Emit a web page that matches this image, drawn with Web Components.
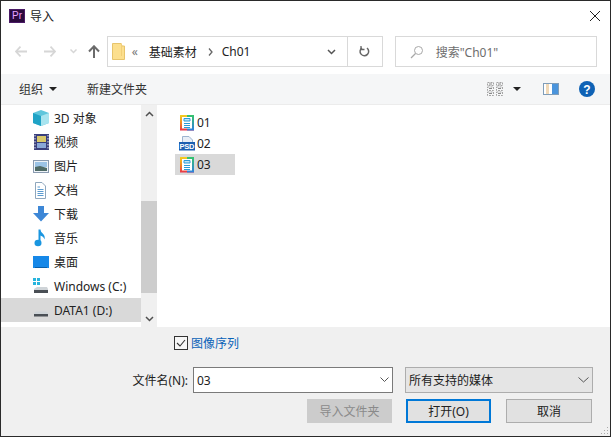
<!DOCTYPE html>
<html>
<head>
<meta charset="utf-8">
<style>
  html, body { margin: 0; height: 100%; overflow: hidden; background: #fff; }
  body { font: 12px "Noto Sans", "Noto Sans CJK SC", sans-serif; color: #1a1a1a; }
</style>
</head>
<body>
<import-dialog></import-dialog>

<script>
const FONT = `"Noto Sans", "Noto Sans CJK SC", sans-serif`;

class TitleBar extends HTMLElement {
  constructor() {
    super();
    this.attachShadow({ mode: 'open' });
    this.shadowRoot.innerHTML = `
    <style>
      :host { display: flex; align-items: center; height: 31px; padding: 0 10px 2px 8px; box-sizing: border-box; background: #fff; }
      .logo { width: 16px; height: 14px; background: #2b0a3d; border: 1px solid #4a1a66; box-sizing: border-box; color: #e8a1ff; font: 10px/12px "Liberation Sans", sans-serif; text-align: center; }
      .name { margin-left: 5px; flex: 1; color: #222; font-size: 12px; }
      svg { display: block; }
    </style>
    <div class="logo">Pr</div>
    <div class="name">导入</div>
    <svg width="10" height="10" viewBox="0 0 10 10"><path d="M0 0L10 10M10 0L0 10" stroke="#222" fill="none"/></svg>
    `;
  }
}

class NavBar extends HTMLElement {
  constructor() {
    super();
    this.attachShadow({ mode: 'open' });
    this.shadowRoot.innerHTML = `
    <style>
      :host { display: flex; align-items: center; height: 42px; padding: 0 13px 3px 12px; box-sizing: border-box; background: #fff; }
      .arrows { display: flex; align-items: center; width: 94px; }
      .arrows svg { display: block; }
      .addr { display: flex; align-items: center; width: 277px; height: 31px; box-sizing: border-box; border: 1px solid #d9d9d9; }
      .folder { margin-left: 4px; }
      .crumbs { flex: 1; display: flex; align-items: center; color: #222; }
      .dim { color: #777; margin: 0 8px 0 7px; width: 9px; font-size: 12px; }
      .sep { margin: 0 9px 0 11px; }
      .drop { width: 30px; display: flex; justify-content: center; }
      .refresh { width: 34px; height: 100%; border-left: 1px solid #d9d9d9; display: flex; align-items: center; justify-content: center; }
      .search { display: flex; align-items: center; width: 203px; height: 31px; box-sizing: border-box; border: 1px solid #d9d9d9; margin-left: 12px; color: #6d6d6d; padding-left: 14px; }
      .search span { margin-left: 12px; }
    </style>
    <div class="arrows">
      <svg style="margin-left:2px" width="12" height="11" viewBox="0 0 12 11"><path d="M5.500 .7L.9 5.500L5.500 10.300M1 5.500H12" stroke="#d6d6d6" stroke-width="1.800" fill="none"/></svg>
      <svg style="margin-left:17px" width="12" height="11" viewBox="0 0 12 11"><path d="M6.500 .7L11.100 5.500L6.500 10.300M11 5.500H0" stroke="#d6d6d6" stroke-width="1.800" fill="none"/></svg>
      <svg style="margin-left:14px" width="7" height="5" viewBox="0 0 7 5"><path d="M.5 .5L3.500 3.500L6.500 .5" stroke="#d6d6d6" stroke-width="1.500" fill="none"/></svg>
      <svg style="margin-left:11px" width="12" height="13" viewBox="0 0 12 13"><path d="M1 6.500L6 1.300L11 6.500M6 2V13" stroke="#6b6b6b" stroke-width="2" fill="none"/></svg>
    </div>
    <div class="addr">
      <svg class="folder" width="13" height="17" viewBox="0 0 13 17"><path d="M.5 .5H9L10 3H12.500V16.500H.5Z" fill="#fcdf8e" stroke="#e7c46c"/><path d="M9.500 .5V13" stroke="#f2cf78"/></svg>
      <div class="crumbs">
        <span class="dim">«</span><span>基础素材</span>
        <svg class="sep" width="5" height="8" viewBox="0 0 5 8"><path d="M1 .5L4 4L1 7.500" stroke="#666" stroke-width="1.300" fill="none"/></svg>
        <span>Ch01</span>
      </div>
      <div class="drop"><svg width="9" height="6" viewBox="0 0 9 6"><path d="M1 1L4.500 4.500L8 1" stroke="#555" stroke-width="1.500" fill="none"/></svg></div>
      <div class="refresh"><svg width="11" height="12" viewBox="0 0 11 12"><path d="M3 1.800A4.300 4.300 0 1 0 8 2" stroke="#666" stroke-width="1.500" fill="none"/><path d="M2 0V3.500H5.500" stroke="#666" stroke-width="1.300" fill="none"/></svg></div>
    </div>
    <div class="search">
      <svg width="14" height="14" viewBox="0 0 14 14"><circle cx="8.500" cy="5.500" r="4" stroke="#a8a8a8" fill="none"/><path d="M5.500 8.500L1 13" stroke="#a8a8a8" stroke-width="1.300"/></svg>
      <span>搜索"Ch01"</span>
    </div>
    `;
  }
}

class ToolBar extends HTMLElement {
  constructor() {
    super();
    this.attachShadow({ mode: 'open' });
    this.shadowRoot.innerHTML = `
    <style>
      :host { display: flex; align-items: center; height: 31px; padding: 0 15px 0 18px; box-sizing: border-box; background: #f5f6f7; border-bottom: 1px solid #ececec; color: #333; }
      .caret { width: 0; height: 0; border: 4px solid transparent; border-top: 4px solid #222; border-bottom: 0; }
      .new { margin-left: 30px; flex: 1; }
      .org { margin-right: 6px; }
      svg { display: block; }
    </style>
    <span class="org">组织</span><span class="caret"></span>
    <span class="new">新建文件夹</span>
    <svg width="16" height="14" viewBox="0 0 16 14"><path d="M.5 .5H6.500V3.500H.5ZM.5 5H6.500V8.500H.5ZM.5 10H6.500V13.500H.5ZM9.500 .5H15.500V3.500H9.500ZM9.500 5H15.500V8.500H9.500ZM9.500 10H15.500V13.500H9.500Z" stroke="#a5a5a5" stroke-dasharray="2 1" fill="none"/><path d="M2 2H5M2 6.500H5M2 11.500H5M11 2H14M11 6.500H14M11 11.500H14" stroke="#8a8a8a"/></svg>
    <span class="caret" style="margin-left:10px"></span>
    <svg style="margin-left:22px" width="16" height="12" viewBox="0 0 16 12"><rect x=".5" y=".5" width="15" height="11" fill="#fff" stroke="#7f9db9"/><rect x="9" y="1" width="6" height="10" fill="#4a94dc"/><rect x="3" y="1" width="3" height="10" fill="#f0d9b8"/></svg>
    <svg style="margin-left:20px" width="16" height="16" viewBox="0 0 16 16"><circle cx="8" cy="8" r="8" fill="#0f62b5"/><text x="8" y="12.500" font-family="Liberation Sans" font-size="12" font-weight="700" fill="#fff" text-anchor="middle">?</text></svg>
    `;
  }
}

const NAV_ICONS = {
  cube: `<path d="M0 4L8 1L16 4V14L8 17L0 14Z" fill="#5fc6dc"/><path d="M0 4L8 7V17L0 14Z" fill="#1fa3c6"/><path d="M8 7L16 4V14L8 17Z" fill="#a8e4ef"/>`,
  video: `<rect x="1" y="1" width="15" height="16" fill="#3a3f7c"/><rect x="4" y="3" width="9" height="6" fill="#d9c86a"/><rect x="4" y="10" width="9" height="5" fill="#8aa8d8"/><path d="M2 2V16M15 2V16" stroke="#dfe3ef" stroke-dasharray="1.500 1.500"/>`,
  pic: `<rect x=".5" y="3.500" width="15" height="12" fill="#eef3f8" stroke="#8a9bb0"/><rect x="2" y="5" width="12" height="5" fill="#9cc4e6"/><path d="M2 10L7 9L14 11V14H2Z" fill="#4f6b66"/>`,
  doc: `<path d="M2.500 1.500H9L12.500 5V17.500H2.500Z" fill="#fff" stroke="#8fa7bd"/><path d="M4.500 6H7M4.500 8.500H10.500M4.500 10.500H10.500M4.500 12.500H10.500M4.500 14.500H10.500" stroke="#5b9bd0"/>`,
  down: `<path d="M5 1H11V8H16L8 16.500L0 8H5Z" fill="#3d87d6"/>`,
  music: `<path d="M6.500 .5V13.500" stroke="#1a96e0" stroke-width="2"/><ellipse cx="5" cy="14" rx="3.500" ry="3.200" fill="#1a96e0"/><path d="M7 .5C8 4.500 13 5 11.500 10.500C11 8 9 7 7 6.500Z" fill="#1a96e0"/>`,
  desk: `<rect x="0" y="3" width="16" height="12" fill="#1688e8"/><path d="M2 14.500H14" stroke="#0b5fa8"/>`,
  win: `<rect x="0" y="1" width="3" height="3" fill="#27b4dd"/><rect x="4" y="1" width="3" height="3" fill="#27b4dd"/><rect x="0" y="5" width="3" height="3" fill="#27b4dd"/><rect x="4" y="5" width="3" height="3" fill="#27b4dd"/><path d="M1 12L4 10H14L15 12V15H1Z" fill="#cfd4d8"/><rect x="1" y="13" width="14" height="3" fill="#4a4f55"/>`,
  drive: `<path d="M1 12L3 10.500H13L15 12V13H1Z" fill="#cfd4d8"/><rect x="1" y="13" width="14" height="2.500" fill="#4a4f55"/>`
};

class NavRow extends HTMLElement {
  constructor() {
    super();
    this.attachShadow({ mode: 'open' });
  }
  connectedCallback() {
    this.shadowRoot.innerHTML = `
    <style>
      :host { display: flex; align-items: center; height: 24px; padding-left: 32px; color: #222; }
      :host([selected]) { background: #d9d9d9; }
      svg { display: block; margin-right: 3px; }
    </style>
    <svg width="18" height="18" viewBox="0 0 18 18">${NAV_ICONS[this.getAttribute('icon')]}</svg>
    <slot></slot>
    `;
  }
}

class SidePane extends HTMLElement {
  constructor() {
    super();
    this.attachShadow({ mode: 'open' });
    this.shadowRoot.innerHTML = `
    <style>
      :host { display: flex; width: 156px; flex: none; box-sizing: border-box; background: #fff; }
      .list { width: 140px; padding-top: 1px; height: 217px; overflow: hidden; }
      .bar { width: 16px; background: #f0f0f0; display: flex; flex-direction: column; }
      .btn { height: 17px; display: flex; align-items: center; justify-content: center; flex: none; }
      .gap { height: 79px; }
      .thumb { height: 92px; background: #cdcdcd; }
      .rest { flex: 1; }
      svg { display: block; }
    </style>
    <div class="list"><slot></slot></div>
    <div class="bar">
      <div class="btn"><svg width="9" height="6" viewBox="0 0 9 6"><path d="M1 5L4.500 1.500L8 5" stroke="#505050" stroke-width="1.500" fill="none"/></svg></div>
      <div class="gap"></div>
      <div class="thumb"></div>
      <div class="rest"></div>
      <div class="btn"><svg width="9" height="6" viewBox="0 0 9 6"><path d="M1 1L4.500 4.500L8 1" stroke="#505050" stroke-width="1.500" fill="none"/></svg></div>
    </div>
    `;
  }
}

let gradId = 0;

class FileRow extends HTMLElement {
  constructor() {
    super();
    this.attachShadow({ mode: 'open' });
  }
  connectedCallback() {
    const psd = this.getAttribute('kind') === 'psd';
    const a = 'a' + gradId, b = 'b' + gradId;
    gradId++;
    const icon = psd
      ? `<path d="M3.500 .5H10L13.500 4V7H3.500Z" fill="#e8eef6" stroke="#9db4cf"/><rect x="0" y="6" width="16" height="8.500" fill="#1c5fb0"/><text x="8" y="13.200" font-family="Liberation Sans" font-size="7.500" font-weight="700" fill="#fff" text-anchor="middle" textLength="15">PSD</text>`
      : `<defs><linearGradient id="${a}" x1="0" y1="0" x2="0" y2="1"><stop offset="0" stop-color="#f5d020"/><stop offset=".5" stop-color="#f08a24"/><stop offset="1" stop-color="#e8344a"/></linearGradient><linearGradient id="${b}" x1="0" y1="0" x2="0" y2="1"><stop offset="0" stop-color="#36c46a"/><stop offset="1" stop-color="#2f7fe0"/></linearGradient></defs><rect x="1" y="0" width="14" height="15.500" fill="url(#${a})"/><rect x="8" y="0" width="7" height="15.500" fill="url(#${b})"/><rect x="3" y="2" width="10" height="11.500" fill="#fff"/><path d="M5 3.500H11V6H5ZM5 8.500H11M5 10.500H11M5 12.500H11" stroke="#2a9bd8" fill="#bfe4f7"/>`;
    this.shadowRoot.innerHTML = `
    <style>
      :host { display: flex; align-items: center; width: 60px; height: 21px; padding-left: 4px; box-sizing: border-box; font: 12px ${FONT}; color: #222; }
      :host([selected]) { background: #d9d9d9; }
      svg { display: block; margin-right: 2px; }
    </style>
    <svg width="16" height="16" viewBox="0 0 16 16">${icon}</svg>
    <slot></slot>
    `;
  }
}

class FileList extends HTMLElement {
  constructor() {
    super();
    this.attachShadow({ mode: 'open' });
    this.shadowRoot.innerHTML = `
    <style>
      :host { display: flex; flex-direction: column; flex: 1; padding: 7px 0 0 18px; background: #fff; }
    </style>
    <slot></slot>
    `;
  }
}

class BottomPanel extends HTMLElement {
  constructor() {
    super();
    this.attachShadow({ mode: 'open' });
    this.shadowRoot.innerHTML = `
    <style>
      :host { display: block; position: relative; height: 109px; box-sizing: border-box; background: #f0f0f0; padding-top: 8px; color: #222; }
      .check { display: flex; align-items: center; height: 16px; padding-left: 173px; color: #0a62b8; }
      .box { width: 14px; height: 14px; box-sizing: border-box; border: 1px solid #333; background: #f6f6f6; margin-right: 3px; }
      .box svg { display: block; }
      .name { display: flex; align-items: center; margin-top: 16px; height: 26px; }
      .label { width: 192px; text-align: right; padding-right: 5px; box-sizing: border-box; }
      .input { display: flex; align-items: center; width: 200px; height: 26px; box-sizing: border-box; border: 1px solid #7a7a7a; background: #fff; padding-left: 3px; }
      .input span { flex: 1; }
      .input svg { margin-right: 3px; }
      .type { display: flex; align-items: center; width: 188px; height: 26px; margin-left: 12px; box-sizing: border-box; border: 1px solid #adadad; background: #e5e5e5; padding-left: 3px; }
      .type span { flex: 1; }
      .type svg { margin-right: 3px; }
      .btns { display: flex; margin-top: 6px; padding-left: 306px; }
      .b { width: 85px; height: 24px; box-sizing: border-box; border: 1px solid #adadad; background: #e1e1e1; display: flex; align-items: center; justify-content: center; }
      .b.off { background: #cccccc; border-color: #cccccc; color: #8a8a8a; }
      .b.main { margin-left: 14px; border: 2px solid #0078d7; }
      .b.last { margin-left: 15px; width: 86px; }
      svg { display: block; }
      .grip { position: absolute; right: 1px; bottom: 1px; }
    </style>
    <div class="check">
      <div class="box"><svg width="12" height="12" viewBox="0 0 12 12"><path d="M2 6L5 9L10 3" stroke="#333" stroke-width="1.100" fill="none"/></svg></div>
      <span>图像序列</span>
    </div>
    <div class="name">
      <div class="label">文件名(N):</div>
      <div class="input"><span>03</span><svg width="9" height="6" viewBox="0 0 9 6"><path d="M.5 .5L4.500 4.500L8.500 .5" stroke="#555" fill="none"/></svg></div>
      <div class="type"><span>所有支持的媒体</span><svg width="11" height="6" viewBox="0 0 11 6"><path d="M.5 .5L5.500 5L10.500 .5" stroke="#555" fill="none"/></svg></div>
    </div>
    <div class="btns">
      <div class="b off">导入文件夹</div>
      <div class="b main">打开(O)</div>
      <div class="b last">取消</div>
    </div>
    <svg class="grip" width="10" height="10" viewBox="0 0 10 10"><path d="M8 2h1v1H8ZM5 5h1v1H5ZM8 5h1v1H8ZM2 8h1v1H2ZM5 8h1v1H5ZM8 8h1v1H8Z" fill="#aaa"/></svg>
    `;
  }
}

class ImportDialog extends HTMLElement {
  constructor() {
    super();
    this.attachShadow({ mode: 'open' });
    this.shadowRoot.innerHTML = `
    <style>
      :host { display: flex; flex-direction: column; width: 611px; height: 437px; box-sizing: border-box; border: 1px solid #2a2a2a; font: 12px ${FONT}; color: #222; background: #fff; }
      .body { display: flex; height: 222px; }
    </style>
    <title-bar></title-bar>
    <nav-bar></nav-bar>
    <tool-bar></tool-bar>
    <div class="body">
      <side-pane>
        <nav-row icon="cube">3D 对象</nav-row>
        <nav-row icon="video">视频</nav-row>
        <nav-row icon="pic">图片</nav-row>
        <nav-row icon="doc">文档</nav-row>
        <nav-row icon="down">下载</nav-row>
        <nav-row icon="music">音乐</nav-row>
        <nav-row icon="desk">桌面</nav-row>
        <nav-row icon="win">Windows (C:)</nav-row>
        <nav-row icon="drive" selected>DATA1 (D:)</nav-row>
      </side-pane>
      <file-list>
        <file-row>01</file-row>
        <file-row kind="psd">02</file-row>
        <file-row selected>03</file-row>
      </file-list>
    </div>
    <bottom-panel></bottom-panel>
    `;
  }
}

customElements.define('title-bar', TitleBar);
customElements.define('nav-bar', NavBar);
customElements.define('tool-bar', ToolBar);
customElements.define('nav-row', NavRow);
customElements.define('side-pane', SidePane);
customElements.define('file-row', FileRow);
customElements.define('file-list', FileList);
customElements.define('bottom-panel', BottomPanel);
customElements.define('import-dialog', ImportDialog);
</script>
</body>
</html>
